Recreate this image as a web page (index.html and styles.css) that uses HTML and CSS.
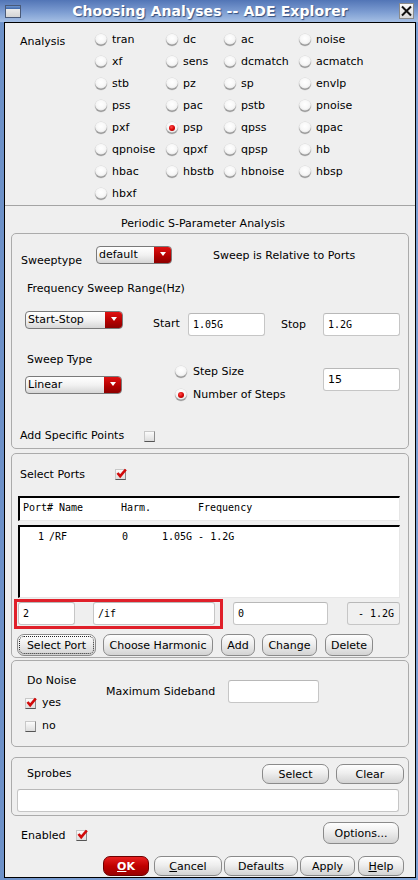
FILE: index.html
```html
<!DOCTYPE html>
<html>
<head>
<meta charset="utf-8">
<title>Choosing Analyses -- ADE Explorer</title>
<link rel="stylesheet" href="styles.css">
</head>
<body>
<div class="window">
  <div class="titlebar">
    <span class="winicon"><span class="winicon-bar"></span></span>
    <span class="title">Choosing Analyses -- ADE Explorer</span>
    <span class="closebtn"><svg width="13" height="14" viewBox="0 0 13 14"><path d="M2 2.5 L11 11.5 M11 2.5 L2 11.5" stroke="#111" stroke-width="2" fill="none"/></svg></span>
  </div>
  <div class="frame">
    <div class="analysis">
      <div class="an-label">Analysis</div>
      <div class="radio"><span class="rb"></span>tran</div>
      <div class="radio"><span class="rb"></span>dc</div>
      <div class="radio"><span class="rb"></span>ac</div>
      <div class="radio"><span class="rb"></span>noise</div>
      <div class="radio"><span class="rb"></span>xf</div>
      <div class="radio"><span class="rb"></span>sens</div>
      <div class="radio"><span class="rb"></span>dcmatch</div>
      <div class="radio"><span class="rb"></span>acmatch</div>
      <div class="radio"><span class="rb"></span>stb</div>
      <div class="radio"><span class="rb"></span>pz</div>
      <div class="radio"><span class="rb"></span>sp</div>
      <div class="radio"><span class="rb"></span>envlp</div>
      <div class="radio"><span class="rb"></span>pss</div>
      <div class="radio"><span class="rb"></span>pac</div>
      <div class="radio"><span class="rb"></span>pstb</div>
      <div class="radio"><span class="rb"></span>pnoise</div>
      <div class="radio"><span class="rb"></span>pxf</div>
      <div class="radio"><span class="rb on"></span>psp</div>
      <div class="radio"><span class="rb"></span>qpss</div>
      <div class="radio"><span class="rb"></span>qpac</div>
      <div class="radio"><span class="rb"></span>qpnoise</div>
      <div class="radio"><span class="rb"></span>qpxf</div>
      <div class="radio"><span class="rb"></span>qpsp</div>
      <div class="radio"><span class="rb"></span>hb</div>
      <div class="radio"><span class="rb"></span>hbac</div>
      <div class="radio"><span class="rb"></span>hbstb</div>
      <div class="radio"><span class="rb"></span>hbnoise</div>
      <div class="radio"><span class="rb"></span>hbsp</div>
      <div class="radio"><span class="rb"></span>hbxf</div>
    </div>

    <div class="sec-title">Periodic S-Parameter Analysis</div>

    <div class="group g1">
      <div class="rowA">
        <span class="lbl-sweeptype">Sweeptype</span>
        <span class="dd dd-default"><span class="dd-text">default</span><span class="dd-arrow"></span></span>
        <span class="rel">Sweep is Relative to Ports</span>
      </div>
      <div class="rowB">Frequency Sweep Range(Hz)</div>
      <div class="rowC">
        <span class="dd dd-ss"><span class="dd-text">Start-Stop</span><span class="dd-arrow"></span></span>
        <span class="lbl-start">Start</span>
        <span class="in mono in-start">1.05G</span>
        <span class="lbl-stop">Stop</span>
        <span class="in mono in-stop">1.2G</span>
      </div>
      <div class="rowD">
        <div class="colL">
          <div class="lbl-swtype">Sweep Type</div>
          <span class="dd dd-lin"><span class="dd-text">Linear</span><span class="dd-arrow"></span></span>
        </div>
        <div class="colM">
          <div class="radio r-step"><span class="rb"></span>Step Size</div>
          <div class="radio r-num"><span class="rb on"></span>Number of Steps</div>
        </div>
        <span class="in in-steps">15</span>
      </div>
      <div class="rowE">
        <span class="lbl-add">Add Specific Points</span>
        <span class="cb"></span>
      </div>
    </div>

    <div class="group g2">
      <div class="row-sel">
        <span class="lbl-selports">Select Ports</span>
        <span class="cb checked"><svg width="11" height="11" viewBox="0 0 11 11"><path d="M1.5 5 L4.2 8.2 L9.8 1.5" stroke="#d10a0a" stroke-width="2.6" fill="none"/></svg></span>
      </div>
      <div class="list-head mono">
        <span class="h-port">Port#</span><span class="h-name">Name</span><span class="h-harm">Harm.</span><span>Frequency</span>
      </div>
      <div class="list-body mono">
        <div class="list-row"><span class="c-num">1</span><span class="c-name">/RF</span><span class="c-harm">0</span><span>1.05G - 1.2G</span></div>
      </div>
      <div class="row-inputs">
        <div class="redbox">
          <span class="in mono in-port">2</span>
          <span class="in mono in-name">/if</span>
        </div>
        <span class="in mono in-harm">0</span>
        <span class="in mono in-freq">- 1.2G</span>
      </div>
      <div class="row-btns">
        <span class="btn focus b-selport">Select Port</span>
        <span class="btn b-harm">Choose Harmonic</span>
        <span class="btn b-add">Add</span>
        <span class="btn b-change">Change</span>
        <span class="btn b-delete">Delete</span>
      </div>
    </div>

    <div class="group g3">
      <div class="noise-l">
        <div class="lbl-donoise">Do Noise</div>
        <div class="cbrow cb-yes"><span class="cb checked"><svg width="11" height="11" viewBox="0 0 11 11"><path d="M1.5 5 L4.2 8.2 L9.8 1.5" stroke="#d10a0a" stroke-width="2.6" fill="none"/></svg></span>yes</div>
        <div class="cbrow cb-no"><span class="cb"></span>no</div>
      </div>
      <span class="lbl-maxsb">Maximum Sideband</span>
      <span class="in in-maxsb"></span>
    </div>

    <div class="group g4">
      <div class="row-sprobes">
        <span class="lbl-sprobes">Sprobes</span>
        <span class="btn b-select">Select</span>
        <span class="btn b-clear">Clear</span>
      </div>
      <span class="in in-sprobes"></span>
    </div>

    <div class="row-enabled">
      <span class="lbl-enabled">Enabled</span>
      <span class="cb checked"><svg width="11" height="11" viewBox="0 0 11 11"><path d="M1.5 5 L4.2 8.2 L9.8 1.5" stroke="#d10a0a" stroke-width="2.6" fill="none"/></svg></span>
      <span class="btn b-options">Options...</span>
    </div>

    <div class="row-bottom">
      <span class="btn b-ok"><u>O</u>K</span>
      <span class="btn b-cancel"><u>C</u>ancel</span>
      <span class="btn b-defaults">Defaults</span>
      <span class="btn b-apply">Apply</span>
      <span class="btn b-help"><u>H</u>elp</span>
    </div>
  </div>
</div>
</body>
</html>
```
FILE: styles.css
```css
* { box-sizing: border-box; }
html, body { margin: 0; padding: 0; }
body {
  font-family: "DejaVu Sans", "Liberation Sans", sans-serif;
  font-size: 11px;
  color: #000;
  background: #86a6d6;
}
.mono { font-family: "DejaVu Sans Mono", "Liberation Mono", monospace; font-size: 10px; }

.window {
  width: 418px;
  height: 880px;
  display: flex;
  flex-direction: column;
  background: linear-gradient(to right, #6d91c8, #8db0e0 50%, #7c9fd3);
}

/* title bar */
.titlebar {
  height: 22px;
  flex: none;
  display: flex;
  align-items: center;
  background: linear-gradient(#5275b6, #7d9dd2 55%, #a5bfe4);
}
.winicon {
  width: 16px;
  height: 13px;
  margin-left: 5px;
  margin-top: 1px;
  border: 1px solid #4a5a78;
  background: linear-gradient(#f4f4f4, #d4d4d4);
  display: flex;
  flex-direction: column;
}
.winicon-bar { height: 3px; background: linear-gradient(#6f95cf, #3f67a8); }
.title {
  flex: 1;
  text-align: center;
  color: #fff;
  font-weight: bold;
  font-size: 14px;
  letter-spacing: 0.1px;
  text-shadow: 1px 1px 1px #34507f;
}
.closebtn {
  width: 15px;
  height: 16px;
  margin-right: 4px;
  border: 1px solid #8a8a8a;
  background: linear-gradient(#fbfbfb, #d9d9d9);
  display: flex;
  align-items: center;
  justify-content: center;
}

/* inner frame */
.frame {
  flex: 1;
  margin: 0 2px 2px 4px;
  border: 1px solid #000;
  background: #efefef;
  display: flex;
  flex-direction: column;
}

/* analysis radios */
.analysis {
  height: 183px;
  flex: none;
  border-bottom: 1px solid #a4a4a4;
  padding: 6px 0 0 15px;
  display: grid;
  grid-template-columns: 75px 71px 58px 75px 1fr;
  grid-auto-rows: 22px;
}
.an-label { grid-row: 1 / span 8; line-height: 16px; padding-top: 5px; }
.radio {
  display: flex;
  align-items: center;
  gap: 5px;
  line-height: 16px;
  white-space: nowrap;
}
.rb {
  width: 12px;
  height: 12px;
  flex: none;
  border-radius: 50%;
  background: radial-gradient(circle at 50% 35%, #ffffff 0, #f7f7f7 45%, #d9d9d9 80%, #bdbdbd 100%);
  box-shadow: inset 0 -1.5px 0 #9c9c9c, 0 0 0 0.5px #d8d8d8;
  display: flex;
  align-items: center;
  justify-content: center;
}
.rb.on::before {
  content: "";
  width: 6px;
  height: 6px;
  border-radius: 50%;
  background: radial-gradient(circle at 40% 35%, #ff4a4a, #d40000 55%, #8a0000);
}

.sec-title {
  height: 27px;
  flex: none;
  padding: 10px 14px 0 0;
  line-height: 16px;
  text-align: center;
}

/* group boxes */
.group {
  flex: none;
  margin: 0 6px;
  border: 1px solid #ababab;
  border-radius: 5px;
}
.g1 { height: 216px; }
.g2 { height: 205px; margin-top: 4px; }
.g3 { height: 87px; margin-top: 2px; display: flex; align-items: flex-start; }
.g4 { height: 59px; margin-top: 10px; }

/* dropdowns */
.dd {
  height: 18px;
  display: flex;
  border: 1px solid #7a7a7a;
  border-radius: 4px;
  background: linear-gradient(#ffffff, #f2f2f2 50%, #d6d6d6);
  overflow: hidden;
  flex: none;
}
.dd-text { flex: 1; padding-left: 2px; line-height: 16px; white-space: nowrap; }
.dd-arrow {
  width: 17px;
  background: linear-gradient(#e01010, #b00000 60%, #8c0000);
  display: flex;
  justify-content: center;
  padding-top: 5px;
}
.dd-arrow::before {
  content: "";
  width: 0;
  height: 0;
  border-left: 3.5px solid transparent;
  border-right: 3.5px solid transparent;
  border-top: 4px solid #fff;
}

/* inputs */
.in {
  display: block;
  height: 23px;
  flex: none;
  background: #fff;
  border: 1px solid #c6c6c6;
  border-top-color: #b8b8b8;
  border-radius: 3px;
  padding-left: 4px;
  line-height: 22px;
  white-space: nowrap;
}

/* checkboxes */
.cb {
  width: 11px;
  height: 11px;
  flex: none;
  display: inline-flex;
  align-items: center;
  justify-content: center;
  background: linear-gradient(#fbfbfb, #dddddd);
  border: 1px solid #c8c8c8;
  border-right-color: #8c8c8c;
  border-bottom-color: #555;
}
.cb svg { margin: -2px -2px 0 0; }

/* buttons */
.btn {
  height: 22px;
  flex: none;
  display: flex;
  align-items: center;
  justify-content: center;
  border: 1px solid #8a8a8a;
  border-radius: 7px;
  background: linear-gradient(#fefefe, #eeeeee 45%, #d3d3d3);
  white-space: nowrap;
}
.btn.focus { outline: 1px dotted #222; outline-offset: -3px; }

/* group 1 rows */
.rowA { height: 36px; display: flex; align-items: flex-start; padding: 12px 0 0 9px; }
.lbl-sweeptype { width: 75px; margin-top: 7px; line-height: 16px; }
.dd-default { width: 76px; }
.rel { margin: 2px 0 0 41px; line-height: 16px; }

.rowB { height: 30px; padding: 11px 0 0 15px; line-height: 16px; }

.rowC { height: 45px; display: flex; align-items: flex-start; padding-left: 13px; }
.dd-ss { width: 98px; margin-top: 11px; }
.lbl-start { width: 35px; margin: 16px 0 0 30px; line-height: 16px; }
.in-start { width: 77px; margin-top: 13px; }
.lbl-stop { width: 42px; margin: 17px 0 0 16px; line-height: 16px; }
.in-stop { width: 77px; margin-top: 13px; }

.rowD { height: 80px; display: flex; align-items: flex-start; padding-left: 13px; }
.colL { width: 150px; }
.lbl-swtype { padding-left: 2px; margin-top: 7px; line-height: 16px; }
.dd-lin { width: 97px; margin-top: 8px; }
.colM { width: 148px; }
.colM .radio { gap: 6px; }
.r-step { margin-top: 19px; }
.r-num { margin-top: 7px; }
.in-steps { width: 77px; margin-top: 23px; }

.rowE { height: 22px; display: flex; align-items: center; padding-left: 8px; }
.lbl-add { width: 124px; line-height: 16px; }

/* group 2 */
.row-sel { height: 40px; display: flex; align-items: flex-start; padding: 13px 0 0 8px; }
.lbl-selports { width: 95px; line-height: 16px; }
.row-sel .cb { margin-top: 2px; }

.list-head {
  margin: 2px 0 0 6px;
  width: 382px;
  height: 25px;
  background: #fff;
  border-top: 2px solid #000;
  border-left: 2px solid #000;
  border-right: 1px solid #e6e6e6;
  border-bottom: 1px solid #e6e6e6;
  padding: 2px 0 0 3px;
  line-height: 16px;
  display: flex;
  white-space: pre;
}
.h-port { width: 36px; }
.h-name { width: 62px; }
.h-harm { width: 77px; }

.list-body {
  margin: 4px 0 0 6px;
  width: 382px;
  height: 73px;
  background: #fff;
  border-top: 2px solid #000;
  border-left: 2px solid #000;
  border-right: 1px solid #e6e6e6;
  border-bottom: 1px solid #e6e6e6;
  padding: 2px 0 0 18px;
  line-height: 16px;
}
.list-row { display: flex; white-space: pre; }
.c-num { width: 11px; }
.c-name { width: 73px; }
.c-harm { width: 40px; }

.row-inputs { height: 30px; margin-top: 1px; display: flex; align-items: flex-start; }
.redbox {
  margin-left: 2px;
  width: 209px;
  height: 30px;
  border: 3px solid #e0202a;
  display: flex;
  padding-left: 1px;
}
.in-port { width: 57px; }
.in-name { width: 122px; margin-left: 18px; }
.in-harm { width: 95px; margin: 3px 0 0 10px; }
.in-freq {
  width: 53px;
  margin: 3px 0 0 19px;
  background: #f0f0f0;
  text-align: right;
  padding: 0 5px 0 0;
}

.row-btns { height: 22px; margin-top: 5px; display: flex; padding-left: 5px; }
.b-selport { width: 79px; }
.b-harm { width: 110px; margin-left: 7px; }
.b-add { width: 34px; margin-left: 8px; }
.b-change { width: 55px; margin-left: 7px; }
.b-delete { width: 48px; margin-left: 8px; }

/* group 3 */
.noise-l { width: 94px; padding-left: 13px; }
.lbl-donoise { padding-left: 2px; margin-top: 12px; line-height: 16px; }
.cbrow { display: flex; align-items: center; gap: 6px; line-height: 16px; }
.cb-yes { margin-top: 6px; }
.cb-no { margin-top: 7px; }
.lbl-maxsb { width: 122px; margin-top: 23px; line-height: 16px; }
.in-maxsb { width: 91px; margin-top: 19px; }

/* group 4 */
.row-sprobes { height: 31px; display: flex; align-items: flex-start; padding: 0 4px 0 15px; }
.lbl-sprobes { flex: 1; margin-top: 8px; line-height: 16px; }
.b-select { width: 67px; height: 20px; margin-top: 6px; }
.b-clear { width: 68px; height: 20px; margin: 6px 0 0 7px; }
.in-sprobes { width: 382px; margin-left: 5px; }

/* bottom */
.row-enabled { height: 22px; margin-top: 6px; display: flex; align-items: flex-start; padding: 0 16px 0 16px; flex: none; }
.lbl-enabled { width: 55px; margin-top: 6px; line-height: 16px; }
.row-enabled .cb { margin-top: 8px; }
.b-options { width: 76px; margin-left: auto; }

.row-bottom { height: 20px; margin-top: 12px; display: flex; justify-content: flex-end; padding-right: 11px; flex: none; }
.row-bottom .btn { height: 20px; }
.b-ok {
  width: 46px;
  color: #fff;
  font-weight: bold;
  border-color: #6e0000;
  background: linear-gradient(#e82020, #c00000 50%, #9a0000);
}
.b-cancel { width: 68px; margin-left: 5px; }
.b-defaults { width: 74px; margin-left: 2px; }
.b-apply { width: 55px; margin-left: 2px; }
.b-help { width: 46px; margin-left: 3px; }
```
